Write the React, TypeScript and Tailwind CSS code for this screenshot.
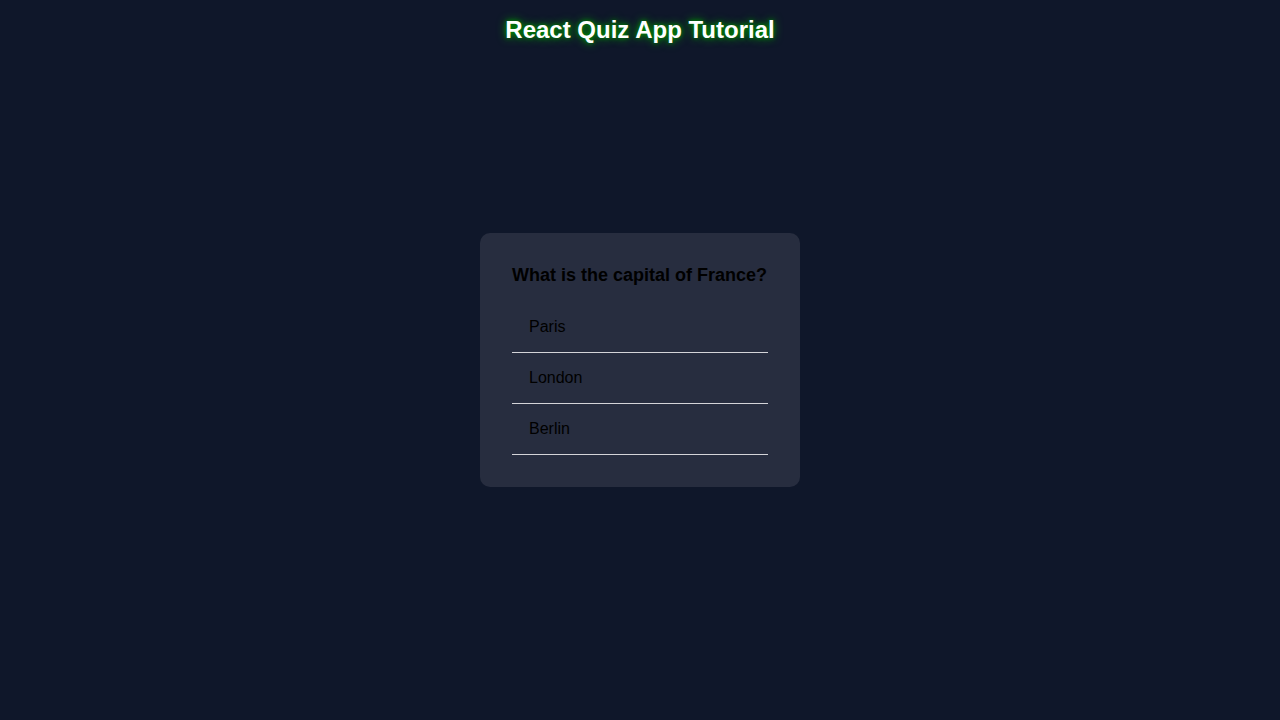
const options = ['Paris', 'London', 'Berlin'];

export default function App() {
  return (
    <div className="flex min-h-screen flex-col bg-[#0f172a] font-['Liberation_Sans',Arial,sans-serif]">
      {/* Header */}
      <header className="flex h-[60px] items-center justify-center">
        <h1 className="text-[24px] font-bold leading-[28px] text-white [text-shadow:0_0_10px_#00a000,0_0_4px_#008000]">
          React Quiz App Tutorial
        </h1>
      </header>

      {/* Quiz card */}
      <main className="flex flex-1 items-center justify-center">
        <div className="w-[320px] rounded-[10px] bg-[#272d3f] p-8">
          <h2 className="mb-4 text-[18px] font-bold leading-[21px] text-black">
            What is the capital of France?
          </h2>
          <ul>
            {options.map((option) => (
              <li
                key={option}
                className="border-b border-[#d4d4d8] py-4 pl-[17px] pr-4 text-[16px] leading-[18px] text-black"
              >
                {option}
              </li>
            ))}
          </ul>
        </div>
      </main>

      <div className="h-[60px]" />
    </div>
  );
}
